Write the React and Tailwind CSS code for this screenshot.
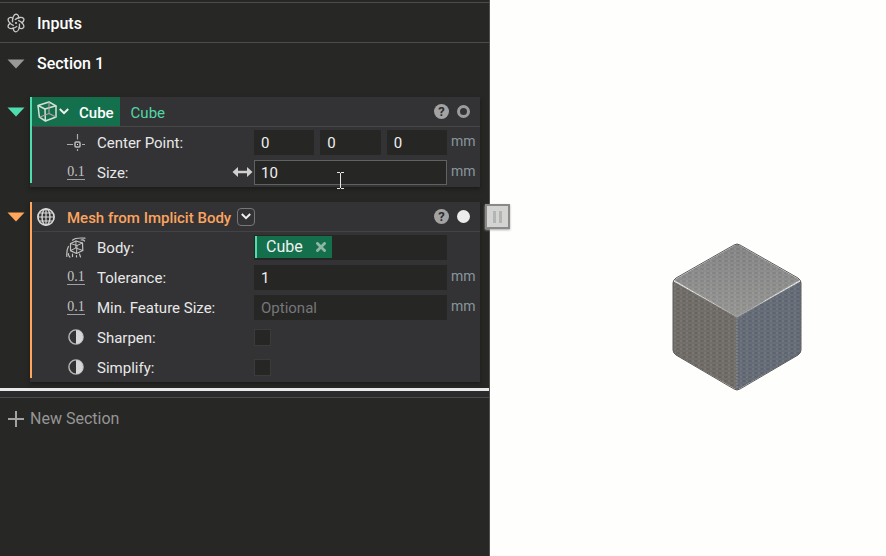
import React, { useState } from "react";

function InputsIcon() {
  return (
    <svg width="18" height="20" viewBox="0 0 18 20" fill="none" stroke="#c9c9c9" strokeWidth="1.3">
      {[0, 60, 120, 180, 240, 300].map((angle) => (
        <path
          key={angle}
          d="M5.6 9.4C5 5.4 6.6 1.4 9 1.2C10.8 1.4 11.8 3.4 11.6 5.4"
          transform={`rotate(${angle} 9 10)`}
        />
      ))}
      <circle cx="9" cy="10" r="1.1" fill="#c9c9c9" stroke="none" />
    </svg>
  );
}

function CubeIcon() {
  return (
    <svg width="20" height="21" viewBox="0 0 20 21" fill="none" stroke="#d5dfda" strokeWidth="1.5" strokeLinejoin="round">
      <path d="M1 4.5L12 1L19 4.8L8 8Z" />
      <path d="M1 4.5L2.4 16.2L8.4 20L8 8" />
      <path d="M8.4 20L19 16L19 4.8" />
      <path d="M12 1L12 12.5L2.4 16.2M12 12.5L19 16" strokeWidth="1.1" stroke="#b3a5aa" />
    </svg>
  );
}

function PointIcon() {
  return (
    <svg width="18" height="17" viewBox="0 0 18 17" fill="none" stroke="#a9a9a9" strokeWidth="1.2">
      <rect x="8" y="8" width="5" height="5" rx="1" strokeWidth="1.5" stroke="#bdbdbd" />
      <path d="M10.5 0V5.5M10.5 15V17M0 10.5H6M15 10.5H18" />
      <path d="M10 10.5H11" stroke="#e8e8e8" />
    </svg>
  );
}

function GlobeIcon() {
  return (
    <svg width="18" height="18" viewBox="0 0 18 18" fill="none" stroke="#d8d8d8" strokeWidth="1.4">
      <circle cx="9" cy="9" r="8.1" strokeWidth="1.7" />
      <ellipse cx="9" cy="9" rx="4" ry="8.1" />
      <path d="M9 1V17M1 9H17M2.4 5H15.6M2.4 13H15.6" strokeWidth="1.2" />
    </svg>
  );
}

function BodyIcon() {
  return (
    <svg width="20" height="21" viewBox="0 0 20 21" fill="none" stroke="#c2c2c2" strokeWidth="1.2" strokeLinejoin="round" strokeLinecap="round">
      <path d="M4.5 6.5L10 4L16.5 6L16.8 13.5L10.5 16.5L4.5 13.6Z" />
      <path d="M4.5 6.5L11 8.5L16.5 6M11 8.5L10.5 16.5M10 4L9.8 11L4.5 13.6M9.8 11L16.8 13.5" strokeWidth="1" />
      <path d="M6.5 3.2C9 1 13 .6 19 1.2M15 3C17 2.6 18 3 18.5 4" />
      <path d="M2.4 9.5C1 12 .6 15.5 .8 19.5M2.5 16.5C2.2 18 2.5 19 4 20.2M6.5 17V19.5M10.5 18.5V20M13.5 17L14.5 20" />
    </svg>
  );
}

function NumberIcon() {
  return (
    <span className="block w-[18px] border-b border-[#a0a0a0] text-center font-['Liberation_Serif',serif] text-sm leading-[15px] text-[#c4c4c4]">
      0.1
    </span>
  );
}

function ToggleIcon() {
  return (
    <svg width="16" height="16" viewBox="0 0 16 16">
      <circle cx="8" cy="8" r="7.1" fill="none" stroke="#b8b8b8" strokeWidth="1.4" />
      <path d="M8 1A7 7 0 0 1 8 15Z" fill="#d6d6d6" />
    </svg>
  );
}

function Chevron() {
  return (
    <svg width="10" height="7" viewBox="0 0 10 7" fill="none" stroke="#f0f0f0" strokeWidth="2">
      <path d="M.8 1L5 5.2L9.2 1" />
    </svg>
  );
}

function Collapse({ label, className }) {
  return (
    <button type="button" aria-label={label} className={className}>
      <svg width="18" height="10" viewBox="0 0 18 10" fill="currentColor">
        <path d="M.5 .5H17.5L9 9.5Z" />
      </svg>
    </button>
  );
}

function HelpButton() {
  return (
    <button
      type="button"
      aria-label="Help"
      className="flex size-[15px] items-center justify-center rounded-full bg-[#a3a3a3] text-[13px] leading-none font-bold text-[#2d2d2f]"
    >
      ?
    </button>
  );
}

function Row({ icon, label, htmlFor, extra, unit, children }) {
  return (
    <div className="grid h-[30px] grid-cols-[64px_157px_minmax(0,1fr)_33px] items-center">
      <div className="flex justify-center pl-[22px]">{icon}</div>
      <div className="flex items-center justify-between pr-px">
        <label htmlFor={htmlFor} className="pt-0.5">{label}</label>
        {extra}
      </div>
      {children}
      <span className="pb-0.5 pl-1 text-sm text-[#88969c]">{unit}</span>
    </div>
  );
}

const field =
  "h-[25px] w-full min-w-0 bg-[#262624] px-[7px] pt-0.5 text-[15px] text-[#f0f0f0] outline-none placeholder:text-[#77777a]";

function Tick({ id }) {
  return (
    <input
      id={id}
      type="checkbox"
      className="size-[17px] appearance-none border border-[#3e3a39] bg-[#262624]"
    />
  );
}

function CubeBlock() {
  const [center, setCenter] = useState(["0", "0", "0"]);
  const [size, setSize] = useState("10");

  return (
    <div className="flex items-start">
      <Collapse label="Collapse Cube" className="w-[30px] pt-2.5 pl-[7px] text-[#4fdcae]" />
      <div className="flex flex-1 bg-[#333335] shadow-[0_2px_4px_#1b1b1a]">
        <div className="mb-1 w-0.5 bg-[#4fdcae]" />
        <div className="min-w-0 flex-1 pl-px">
          <div className="flex h-[30px] items-stretch border-b border-[#484846]">
            <button type="button" className="-ml-px flex items-center bg-[#14704c] pr-1.5 pl-[5px] font-medium text-white">
              <CubeIcon />
              <span className="mr-[10px] ml-[2px]">
                <Chevron />
              </span>
              <span className="pt-0.5">Cube</span>
            </button>
            <span className="pt-1.5 pl-[11px] text-[#4fd8a6]">Cube</span>
            <div className="ml-auto flex items-center gap-2 pr-2.5">
              <HelpButton />
              <button type="button" aria-label="Hide Cube" className="size-[13px] rounded-full border-[3px] border-[#9c9c9c]" />
            </div>
          </div>
          <Row icon={<PointIcon />} label="Center Point:" htmlFor="center-x" unit="mm">
            <div className="flex gap-1.5">
              {["x", "y", "z"].map((axis, i) => (
                <input
                  key={axis}
                  id={`center-${axis}`}
                  aria-label={`Center Point ${axis}`}
                  className={field}
                  value={center[i]}
                  onChange={(e) => setCenter(center.map((c, j) => (j === i ? e.target.value : c)))}
                />
              ))}
            </div>
          </Row>
          <Row
            icon={<NumberIcon />}
            label="Size:"
            htmlFor="size"
            unit="mm"
            extra={
              <svg width="21" height="12" viewBox="0 0 21 12" fill="#d0d0d0">
                <path d="M.5 6L6 1V4.8H15V1L20.5 6L15 11V7.2H6V11Z" />
              </svg>
            }
          >
            <div className="relative flex">
              <input
                id="size"
                className="h-[25px] w-full border border-[#5e6260] bg-[#262624] px-1.5 pt-0.5 text-[15px] text-[#f0f0f0] outline-none"
                value={size}
                onChange={(e) => setSize(e.target.value)}
              />
              <svg className="absolute top-[12px] left-[83px]" width="7" height="17" viewBox="0 0 7 17" fill="none" stroke="#e6e6e6">
                <path d="M0 .5H3M4 .5H7M0 16.5H3M4 16.5H7M3.5 1V16" />
              </svg>
            </div>
          </Row>
        </div>
      </div>
    </div>
  );
}

function MeshBlock() {
  const [tolerance, setTolerance] = useState("1");

  return (
    <div className="flex items-start">
      <Collapse label="Collapse Mesh from Implicit Body" className="w-[30px] pt-2.5 pl-[7px] text-[#ffa65c]" />
      <div className="flex flex-1 bg-[#333335] shadow-[0_2px_4px_#1b1b1a]">
        <div className="mb-1 w-0.5 bg-[#ffa65c]" />
        <div className="min-w-0 flex-1 pl-px">
          <div className="flex h-[30px] items-center border-b border-[#434345] pl-1">
            <GlobeIcon />
            <span className="pt-0.5 pl-3 font-medium text-[#fba45f]">Mesh from Implicit Body</span>
            <button
              type="button"
              aria-label="Variants"
              className="ml-[6px] flex size-[18px] items-center justify-center rounded-sm border border-[#77777a]"
            >
              <Chevron />
            </button>
            <div className="ml-auto flex items-center gap-2 pr-2.5">
              <HelpButton />
              <button type="button" aria-label="Show mesh" className="size-[13px] rounded-full bg-[#ececec]" />
            </div>
          </div>
          <Row icon={<BodyIcon />} label="Body:">
            <div className="flex h-[25px] items-center bg-[#262624] pl-px">
              <span className="flex h-[22px] items-center gap-[13px] border-l-2 border-[#4fdcae] bg-[#14704c] pr-1.5 pl-[9px] text-base text-[#f0f0f0]">
                Cube
                <button type="button" aria-label="Remove Cube">
                  <svg width="10" height="10" viewBox="0 0 10 10" stroke="#8fb5a5" strokeWidth="2.8">
                    <path d="M.5 .5L9.5 9.5M9.5 .5L.5 9.5" />
                  </svg>
                </button>
              </span>
            </div>
          </Row>
          <Row icon={<NumberIcon />} label="Tolerance:" htmlFor="tolerance" unit="mm">
            <input id="tolerance" className={field} value={tolerance} onChange={(e) => setTolerance(e.target.value)} />
          </Row>
          <Row icon={<NumberIcon />} label="Min. Feature Size:" htmlFor="feature" unit="mm">
            <input id="feature" className={field} placeholder="Optional" />
          </Row>
          <Row icon={<ToggleIcon />} label="Sharpen:" htmlFor="sharpen">
            <Tick id="sharpen" />
          </Row>
          <Row icon={<ToggleIcon />} label="Simplify:" htmlFor="simplify">
            <Tick id="simplify" />
          </Row>
        </div>
      </div>
    </div>
  );
}

function MeshCube() {
  return (
    <svg className="absolute top-[243px] left-[182px]" width="130" height="148" viewBox="0 0 130 148">
      <defs>
        <pattern id="mesh" width="6" height="4" patternUnits="userSpaceOnUse">
          <path d="M0 0L3 2L6 0M0 4L3 2L6 4M3 0V4" fill="none" stroke="#fff" strokeOpacity=".09" strokeWidth=".7" />
          <path d="M0 2H2M4 2H6" stroke="#000" strokeOpacity=".1" strokeWidth=".7" />
        </pattern>
        <linearGradient id="top" x1="0" y1="0" x2="0" y2="1">
          <stop offset="0" stopColor="#818181" />
          <stop offset="1" stopColor="#939392" />
        </linearGradient>
      </defs>
      <path d="M65 1L128 37L65 74L2 37Z" fill="url(#top)" />
      <path d="M1 38L65 74V147L4 112Q1 110 1 107Z" fill="#6c6863" />
      <path d="M129 38L65 74V147L126 112Q129 110 129 107Z" fill="#616873" />
      <path
        d="M62 2Q65 0 68 2L126 35Q129 37 129 40V107Q129 110 126 112L68 146Q65 148 62 146L4 112Q1 110 1 107V40Q1 37 4 35Z"
        fill="url(#mesh)"
        stroke="#5c5c5c"
      />
      <path d="M3 38L65 74L127 38" fill="none" stroke="#a6a6a6" strokeOpacity=".5" strokeWidth="2" strokeDasharray="2 1" />
      <path d="M65 74V146" stroke="#a6a6a6" strokeOpacity=".6" strokeDasharray="2 1" />
    </svg>
  );
}

export default function App() {
  return (
    <div className="flex min-h-screen bg-[#fefefd] font-['Roboto',sans-serif] text-[15px] leading-5 text-[#e8e8e8]">
      <div className="w-[490px] shrink-0 border-r border-[#505050] bg-[#272725] pt-0.5">
        <header className="flex h-[41px] items-center border-y border-[#4b4b4b] pl-[7px] text-base leading-5 font-medium text-white">
          <InputsIcon />
          <h1 className="pt-0.5 pl-3">Inputs</h1>
        </header>
        <div className="flex h-[41px] items-center pl-[7px] text-base leading-5 font-medium text-white">
          <Collapse label="Collapse Section 1" className="text-[#989898]" />
          <h2 className="pl-3">Section 1</h2>
        </div>
        <div className="flex flex-col gap-[15px] pt-[13px] pr-[9px] pb-1.5">
          <CubeBlock />
          <MeshBlock />
        </div>
        <div className="h-[3px] bg-[#e9e9e9]" />
        <div className="h-1.5 bg-[#2b2b2e]" />
        <div className="border-t border-[#4b4b4b] pt-[11px] pl-2">
          <button type="button" className="flex items-center gap-1.5 text-base leading-5 text-[#969696]">
            <svg width="16" height="16" viewBox="0 0 16 16" stroke="#a3a3a3" strokeWidth="2">
              <path d="M8 0V16M0 8H16" />
            </svg>
            New Section
          </button>
        </div>
      </div>
      <main className="relative flex-1">
        <button
          type="button"
          aria-label="Resize panel"
          className="absolute top-[204px] left-[-5px] flex size-[25px] items-center justify-center gap-[3px] border-2 border-[#8b8889] bg-[#d3d3d1] shadow-[0_1px_2px_#aaaaaa]"
        >
          <span className="h-3 w-[3px] bg-[#b1b5b4]" />
          <span className="h-3 w-[3px] bg-[#b1b5b4]" />
        </button>
        <MeshCube />
      </main>
    </div>
  );
}
